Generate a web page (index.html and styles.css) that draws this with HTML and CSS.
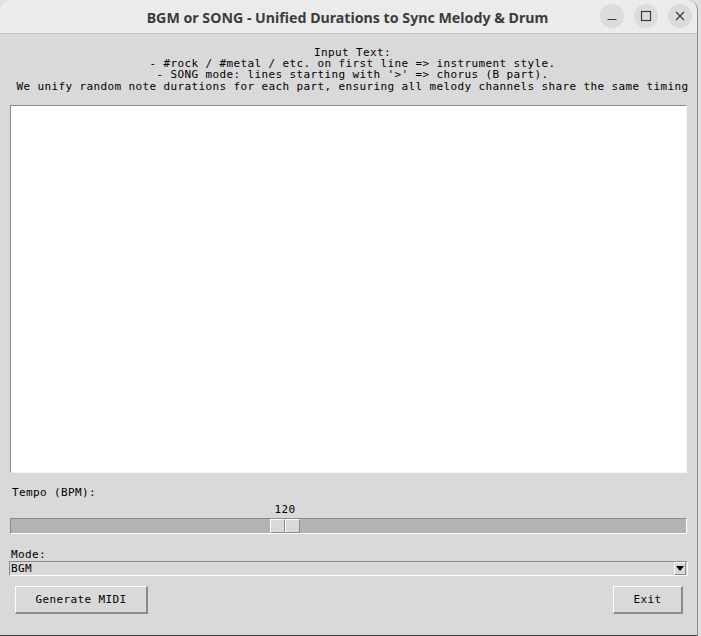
FILE: index.html
```html
<!DOCTYPE html>
<html>
<head>
<meta charset="utf-8">
<title>BGM or SONG</title>
<link rel="stylesheet" href="styles.css">
</head>
<body>
<div class="window">
  <header class="titlebar">
    <span class="title">BGM or SONG - Unified Durations to Sync Melody &amp; Drum</span>
    <div class="controls">
      <span class="ctl"><svg width="12" height="12" viewBox="0 0 12 12"><path d="M1.5 9.5h9" stroke="#3c3c3c" stroke-width="1.2" fill="none"/></svg></span>
      <span class="ctl"><svg width="12" height="12" viewBox="0 0 12 12"><rect x="1.5" y="1.5" width="9" height="9" stroke="#3c3c3c" stroke-width="1.2" fill="none"/></svg></span>
      <span class="ctl"><svg width="12" height="12" viewBox="0 0 12 12"><path d="M2 2l8 8M10 2l-8 8" stroke="#3c3c3c" stroke-width="1.3" fill="none"/></svg></span>
    </div>
  </header>
  <main class="content">
    <div class="intro">
      <div>Input Text:</div>
      <div>- #rock / #metal / etc. on first line =&gt; instrument style.</div>
      <div>- SONG mode: lines starting with '&gt;' =&gt; chorus (B part).</div>
      <div>We unify random note durations for each part, ensuring all melody channels share the same timing</div>
    </div>
    <div class="textarea"></div>
    <div class="label tempo-label">Tempo (BPM):</div>
    <div class="scale">
      <div class="scale-value">120</div>
      <div class="trough">
        <div class="thumb" style="left: 259px"><span class="half"></span><span class="half"></span></div>
      </div>
    </div>
    <div class="label mode-label">Mode:</div>
    <div class="select">
      <span class="select-text">BGM</span>
      <span class="arrow"><svg width="8" height="5" viewBox="0 0 8 5"><path d="M0 0h8L4 5z" fill="#000"/></svg></span>
    </div>
    <div class="buttons">
      <button class="btn gen">Generate MIDI</button>
      <button class="btn exit">Exit</button>
    </div>
  </main>
</div>
</body>
</html>
```
FILE: styles.css
```css
html, body {
  margin: 0;
  padding: 0;
  background: #e0e0e0;
}
body {
  width: 701px;
  height: 636px;
  overflow: hidden;
}
.window {
  width: 697px;
  height: 635px;
  border-right: 1px solid #8a8a8a;
  border-bottom: 1px solid #3a3a3a;
  border-radius: 10px 10px 0 0;
  overflow: hidden;
  display: flex;
  flex-direction: column;
  background: #d9d9d9;
}
.titlebar {
  height: 33px;
  flex: none;
  background: #ebebeb;
  border-bottom: 1px solid #c6c6c6;
  display: flex;
  align-items: center;
  justify-content: center;
  position: relative;
}
.title {
  font-family: "Noto Sans", "Open Sans", sans-serif;
  font-weight: 700;
  font-size: 14.2px;
  color: #3c3c3c;
  margin-left: -2px;
  margin-top: 1px;
}
.controls {
  position: absolute;
  right: 5px;
  top: 4px;
  display: flex;
  gap: 10px;
}
.ctl {
  width: 24px;
  height: 24px;
  border-radius: 50%;
  background: #dcdcdc;
  display: flex;
  align-items: center;
  justify-content: center;
}
.content {
  flex: 1;
  display: flex;
  flex-direction: column;
  padding: 0 10px;
  font-family: "DejaVu Sans Mono", monospace;
  font-size: 11px;
  letter-spacing: 0.38px;
  color: #000;
}
.intro {
  margin-top: 13px;
  line-height: 11.2px;
  text-align: center;
  white-space: nowrap;
  margin-right: -10px;
  margin-left: -10px;
  padding-left: 8px;
}
.textarea {
  flex: none;
  margin-top: 13px;
  height: 366px;
  background: #fff;
  border-top: 1px solid #8c8c8c;
  border-left: 1px solid #8c8c8c;
  border-right: 1px solid #f4f4f4;
  border-bottom: 1px solid #f4f4f4;
}
.label {
  line-height: 13px;
}
.tempo-label {
  margin-top: 13px;
  padding-left: 2px;
}
.scale {
  display: flex;
  flex-direction: column;
}
.scale-value {
  margin-top: 4px;
  line-height: 13px;
  width: 550px;
  text-align: center;
}
.trough {
  margin-top: 2px;
  height: 14px;
  background: #b3b3b3;
  border-top: 1px solid #8a8a8a;
  border-left: 1px solid #8a8a8a;
  border-bottom: 1px solid #fff;
  border-right: 1px solid #fff;
  position: relative;
}
.thumb {
  position: absolute;
  top: 0;
  height: 14px;
  display: flex;
}
.half {
  width: 13px;
  height: 12px;
  background: #d9d9d9;
  border-top: 1px solid #fff;
  border-left: 1px solid #fff;
  border-right: 1px solid #8a8a8a;
  border-bottom: 1px solid #8a8a8a;
}
.mode-label {
  margin-top: 14px;
  padding-left: 1px;
}
.select {
  margin-left: -1px;
  margin-right: -1px;
  height: 13px;
  border-top: 1px solid #8a8a8a;
  border-left: 1px solid #8a8a8a;
  border-bottom: 1px solid #fff;
  border-right: 1px solid #fff;
  display: flex;
  align-items: center;
  justify-content: space-between;
  line-height: 13px;
}
.select-text {
  padding-left: 1px;
}
.arrow {
  width: 10px;
  height: 11px;
  margin-right: 1px;
  background: #d9d9d9;
  border-top: 1px solid #fff;
  border-left: 1px solid #fff;
  border-right: 1px solid #8a8a8a;
  border-bottom: 1px solid #8a8a8a;
  display: flex;
  align-items: center;
  justify-content: center;
}
.buttons {
  margin-top: 10px;
  display: flex;
  justify-content: space-between;
  padding: 0 4px 0 5px;
}
.btn {
  font-family: "DejaVu Sans Mono", monospace;
  font-size: 11px;
  letter-spacing: 0.38px;
  color: #000;
  background: #d9d9d9;
  height: 28px;
  padding: 0;
  margin: 0;
  border-top: 1px solid #fff;
  border-left: 1px solid #fff;
  border-right: 2px solid #8a8a8a;
  border-bottom: 2px solid #8a8a8a;
  border-radius: 0;
}
.gen {
  width: 133px;
}
.exit {
  width: 70px;
}
```
